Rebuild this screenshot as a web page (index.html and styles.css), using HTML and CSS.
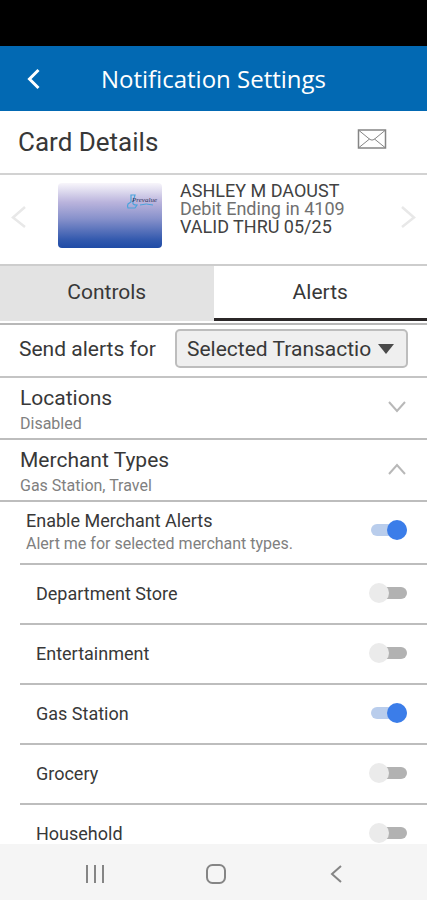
FILE: index.html
```html
<!DOCTYPE html>
<html lang="en">
<head>
<meta charset="utf-8">
<meta name="viewport" content="width=device-width, initial-scale=1">
<title>Notification Settings</title>
<link rel="stylesheet" href="styles.css">
</head>
<body>
<div class="status-bar"></div>
<header class="app-bar">
  <button class="icon-button app-bar-back" type="button" aria-label="Back">
    <svg width="16" height="22" viewBox="0 0 16 22"><path d="M12.500 2 3.500 11l9 9" fill="none" stroke="#fff" stroke-width="3"/></svg>
  </button>
  <h1 class="app-title">Notification Settings</h1>
</header>
<main class="content">
  <section class="section-head">
    <h2 class="section-title">Card Details</h2>
    <button class="icon-button" type="button" aria-label="Messages">
      <svg width="30" height="20" viewBox="0 0 30 20" fill="none" stroke="#858585"><rect x="1.500" y="1" width="27" height="18" stroke-width="1.500"/><path d="M2 1.500 13 10.500q2 1.200 4 0L28 1.500M2 18.500l10.500-8.500M28 18.500 17.500 10"/></svg>
    </button>
  </section>
  <section class="card-row">
    <button class="icon-button" type="button" aria-label="Previous card">
      <svg width="18" height="24" viewBox="0 0 18 24"><path d="M15 2 3 12.500 15 22" fill="none" stroke="#e8e8e8" stroke-width="2.500"/></svg>
    </button>
    <div class="bank-card">
      <svg class="bank-logo" width="34" height="18" viewBox="0 0 34 18">
        <path d="M6 2h4L8 9q-1 3 4 3l-2 3H3q-1-2 0-4l3-2z" fill="none" stroke="#4ba3dc" stroke-width="1.200"/>
        <path d="M15 12q6-2 13 0" fill="none" stroke="#4ba3dc"/>
        <text class="bank-name" x="7" y="9">Prevalue</text>
      </svg>
    </div>
    <div class="card-info">
      <div class="card-strong">ASHLEY M DAOUST</div>
      <div>Debit Ending in 4109</div>
      <div class="card-strong">VALID THRU 05/25</div>
    </div>
    <button class="icon-button card-next" type="button" aria-label="Next card">
      <svg width="18" height="24" viewBox="0 0 18 24"><path d="M3 2 15 12.500 3 22" fill="none" stroke="#e8e8e8" stroke-width="2.500"/></svg>
    </button>
  </section>
  <div class="tabs" role="tablist">
    <button class="tab" type="button" role="tab" aria-selected="false">Controls</button>
    <button class="tab" type="button" role="tab" aria-selected="true">Alerts</button>
  </div>
  <div class="send-row">
    <label for="scope">Send alerts for</label>
    <div class="select-wrap">
      <select id="scope"><option>Selected Transactio</option></select>
      <svg class="select-arrow" width="16" height="10" viewBox="0 0 16 10"><path d="M0 0h16L8 10z" fill="#4a4a4a"/></svg>
    </div>
  </div>
  <button class="group" type="button" aria-expanded="false">
    <span class="stack"><span class="group-title">Locations</span><span class="hint">Disabled</span></span>
    <svg width="18" height="12" viewBox="0 0 18 12"><path d="m1 1 8 9 8-9" fill="none" stroke="#b8b8b8" stroke-width="2"/></svg>
  </button>
  <button class="group" type="button" aria-expanded="true">
    <span class="stack"><span class="group-title">Merchant Types</span><span class="hint">Gas Station, Travel</span></span>
    <svg width="18" height="12" viewBox="0 0 18 12"><path d="m1 11 8-9 8 9" fill="none" stroke="#b8b8b8" stroke-width="2"/></svg>
  </button>
  <div class="options">
    <label class="option option-main"><span class="stack"><span>Enable Merchant Alerts</span><span class="hint">Alert me for selected merchant types.</span></span><input class="toggle" type="checkbox" checked></label>
    <label class="option"><span>Department Store</span><input class="toggle" type="checkbox"></label>
    <label class="option"><span>Entertainment</span><input class="toggle" type="checkbox"></label>
    <label class="option"><span>Gas Station</span><input class="toggle" type="checkbox" checked></label>
    <label class="option"><span>Grocery</span><input class="toggle" type="checkbox"></label>
    <label class="option"><span>Household</span><input class="toggle" type="checkbox"></label>
  </div>
</main>
<nav class="system-nav" aria-label="System">
  <button class="icon-button" type="button" aria-label="Recent apps">
    <svg width="20" height="20" viewBox="0 0 20 20"><path d="M2 1v18M10 1v18M18 1v18" stroke="#858585" stroke-width="2"/></svg>
  </button>
  <button class="icon-button" type="button" aria-label="Home">
    <svg width="20" height="20" viewBox="0 0 20 20"><rect x="1" y="1" width="18" height="18" rx="5.500" fill="none" stroke="#858585" stroke-width="2"/></svg>
  </button>
  <button class="icon-button" type="button" aria-label="Back">
    <svg width="20" height="20" viewBox="0 0 20 20"><path d="M15 2 6 10l9 8" fill="none" stroke="#858585" stroke-width="2"/></svg>
  </button>
</nav>
</body>
</html>
```
FILE: styles.css
```css
* { box-sizing: border-box; }
body {
  margin: 0;
  height: 100vh;
  display: flex;
  flex-direction: column;
  background: #fff;
  color: #383838;
  font-family: Roboto, "Liberation Sans", sans-serif;
  font-size: 18px;
}
button, select { font: inherit; color: inherit; }
h1, h2 { margin: 0; font-weight: 400; }
svg { display: block; flex: none; }
.icon-button { padding: 0; border: 0; background: none; }
.status-bar { flex: none; height: 46px; background: #000; }
.app-bar {
  flex: none;
  display: grid;
  grid-template-columns: 68px 1fr 68px;
  align-items: center;
  height: 65px;
  background: #0269b3;
  color: #fff;
}
.app-bar-back { justify-self: center; }
.app-title {
  text-align: center;
  font-family: "Open Sans", sans-serif;
  font-size: 24px;
  line-height: 32px;
}
.content { flex: 1; min-height: 0; overflow: hidden; }
.section-head {
  display: flex;
  align-items: center;
  justify-content: space-between;
  height: 64px;
  padding: 0 40px 6px 18px;
  border-bottom: 2px solid #d2d2d2;
}
.section-title { font-size: 26px; line-height: 32px; padding-top: 6px; }
.card-row {
  display: flex;
  align-items: flex-start;
  height: 89px;
  padding: 7px 10px 0;
}
.card-row .icon-button { padding-top: 23px; }
.bank-card {
  display: flex;
  justify-content: flex-end;
  width: 104px;
  height: 65px;
  margin: 1px 18px 0 30px;
  padding: 10px 3px;
  border-radius: 4px;
  background: linear-gradient(#f8f6fb, #b9b3dc 30%, #8791cb 55%, #3158ad 88%, #1f4ba6);
}
.bank-name { font: italic 7px "Liberation Serif", serif; fill: #2c3157; }
.card-info { color: #707070; line-height: 18px; }
.card-strong { color: #424242; }
.card-next { margin-left: auto; }
.tabs {
  display: grid;
  grid-template-columns: 1fr 1fr;
  height: 61px;
  padding-bottom: 2px;
  border-top: 2px solid #cdcdcd;
  border-bottom: 2px solid #b8b8b8;
}
.tab {
  padding: 0;
  border: 0;
  border-bottom: 3px solid #e3e3e3;
  background: #e3e3e3;
  font-size: 21px;
}
.tab[aria-selected="true"] { background: #fff; border-color: #2b2728; }
.send-row {
  display: flex;
  align-items: center;
  height: 53px;
  padding: 0 19px 4px;
  border-bottom: 2px solid #c4c4c4;
  font-size: 21px;
}
.select-wrap { position: relative; flex: 1; max-width: 233px; margin-left: auto; }
.send-row label { flex: none; }
select {
  display: block;
  appearance: none;
  width: 100%;
  height: 39px;
  padding: 0 10px;
  border: 2px solid #bdbdbd;
  border-radius: 5px;
  background: #efefef;
}
.select-arrow { position: absolute; right: 14px; top: 15px; pointer-events: none; }
.group {
  display: flex;
  align-items: center;
  justify-content: space-between;
  width: 100%;
  height: 62px;
  padding: 0 21px 2px 20px;
  border: 0;
  border-bottom: 2px solid #bdbdbd;
  background: none;
  text-align: left;
}
.stack { display: flex; flex-direction: column; gap: 2px; padding-top: 6px; }
.group-title { font-size: 21px; line-height: 26px; }
.hint { color: #808080; font-size: 16px; line-height: 22px; }
.options { padding-left: 20px; }
.option {
  display: flex;
  align-items: center;
  justify-content: space-between;
  height: 60px;
  padding: 0 20px 2px 16px;
  border-bottom: 2px solid #bdbdbd;
}
.option-main { height: 63px; padding: 0 20px 6px 6px; }
.toggle {
  appearance: none;
  position: relative;
  width: 36px;
  height: 12px;
  margin: 0;
  border-radius: 6px;
  background: #b2b2b2;
}
.toggle::before {
  content: "";
  position: absolute;
  top: -4px;
  left: -2px;
  width: 20px;
  height: 20px;
  border-radius: 50%;
  background: #ebebeb;
}
.toggle:checked { background: #b9cdec; }
.toggle:checked::before { left: 16px; background: #3b7de9; }
.system-nav {
  flex: none;
  display: flex;
  justify-content: space-between;
  align-items: center;
  height: 56px;
  padding: 3px 19% 0 20%;
  background: #f5f5f5;
}
```
